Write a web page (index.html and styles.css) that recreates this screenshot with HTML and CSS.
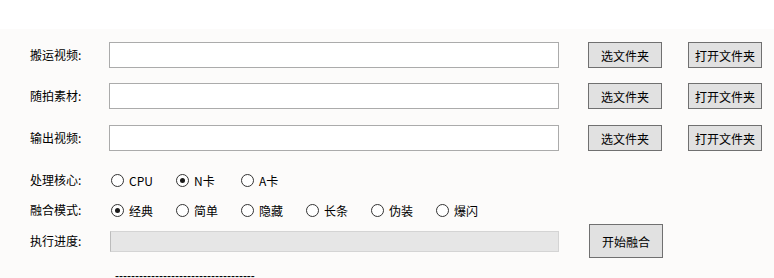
FILE: index.html
```
<!DOCTYPE html>
<html lang="zh-CN">
<head>
    <meta charset="UTF-8">
    <title>视频融合</title>
    <link rel="stylesheet" href="styles.css">
</head>
<body>
    <div class="topbar"></div>
    <div class="panel">
        <!-- 路径选择 -->
        <div class="row row-path first">
            <span class="label">搬运视频:</span>
            <input type="text" class="path">
            <button class="btn">选文件夹</button>
            <button class="btn btn-open">打开文件夹</button>
        </div>
        <div class="row row-path second">
            <span class="label">随拍素材:</span>
            <input type="text" class="path">
            <button class="btn">选文件夹</button>
            <button class="btn btn-open">打开文件夹</button>
        </div>
        <div class="row row-path third">
            <span class="label">输出视频:</span>
            <input type="text" class="path">
            <button class="btn">选文件夹</button>
            <button class="btn btn-open">打开文件夹</button>
        </div>

        <!-- 选项 -->
        <div class="row row-radio core">
            <span class="label">处理核心:</span>
            <label class="opt"><input type="radio" name="core"> CPU</label>
            <label class="opt"><input type="radio" name="core" checked> N卡</label>
            <label class="opt"><input type="radio" name="core"> A卡</label>
        </div>
        <div class="row row-radio mode">
            <span class="label">融合模式:</span>
            <label class="opt"><input type="radio" name="mode" checked> 经典</label>
            <label class="opt"><input type="radio" name="mode"> 简单</label>
            <label class="opt"><input type="radio" name="mode"> 隐藏</label>
            <label class="opt"><input type="radio" name="mode"> 长条</label>
            <label class="opt"><input type="radio" name="mode"> 伪装</label>
            <label class="opt"><input type="radio" name="mode"> 爆闪</label>
        </div>

        <!-- 进度 -->
        <div class="row row-progress">
            <span class="label">执行进度:</span>
            <div class="progress"></div>
            <button class="btn btn-start">开始融合</button>
        </div>
        <div class="log">-----------------------------------</div>
    </div>
</body>
</html>
```

FILE: styles.css
```
body {
    margin: 0;
    background-color: #ffffff;
    font-family: "Noto Sans CJK SC", "Liberation Sans", sans-serif;
    font-size: 12px;
    color: #000;
}
.topbar {
    height: 29px;
    background-color: #ffffff;
}
.panel {
    background-color: #fcfbfa;
    height: 249px;
    padding: 0 0 0 30px;
    overflow: hidden;
}
.row {
    display: flex;
    align-items: center;
}
.label {
    width: 79px;
    flex: none;
    line-height: 16px;
}
.row-path {
    height: 26px;
}
.first {
    padding-top: 13px;
}
.second {
    margin-top: 15px;
}
.third {
    margin-top: 16px;
}
.path {
    width: 450px;
    height: 26px;
    box-sizing: border-box;
    margin: 0;
    border: 1px solid #ababab;
    background-color: #fff;
    padding: 0 4px;
}
.btn {
    width: 74px;
    height: 26px;
    box-sizing: border-box;
    margin: 0 0 0 29px;
    padding: 0;
    border: 1px solid #707070;
    background-color: #e1e1e1;
    font-family: inherit;
    font-size: 12px;
    color: #000;
}
.btn-open {
    margin-left: 26px;
}
.row-radio {
    height: 20px;
}
.core {
    margin-top: 19px;
}
.mode {
    margin-top: 10px;
}
.opt {
    width: 65px;
    flex: none;
    display: flex;
    align-items: center;
    padding-left: 2px;
    box-sizing: border-box;
}
.opt input {
    appearance: none;
    width: 13px;
    height: 13px;
    margin: 0 5px 0 0;
    border: 1px solid #333;
    border-radius: 50%;
    background-color: #fff;
    display: grid;
    place-content: center;
    flex: none;
}
.opt input:checked::before {
    content: "";
    width: 5px;
    height: 5px;
    border-radius: 50%;
    background-color: #1a1a1a;
}
.row-progress {
    height: 34px;
    margin-top: 4px;
}
.progress {
    width: 449px;
    height: 21px;
    box-sizing: border-box;
    margin-left: 1px;
    border: 1px solid #d4d4d4;
    border-left-color: #bcbcbc;
    background-color: #e6e6e6;
}
.btn-start {
    height: 34px;
    margin-left: 30px;
}
.log {
    margin: 10px 0 0 85px;
    line-height: 16px;
    letter-spacing: 0;
    font-family: "Liberation Sans", sans-serif;
}
```
